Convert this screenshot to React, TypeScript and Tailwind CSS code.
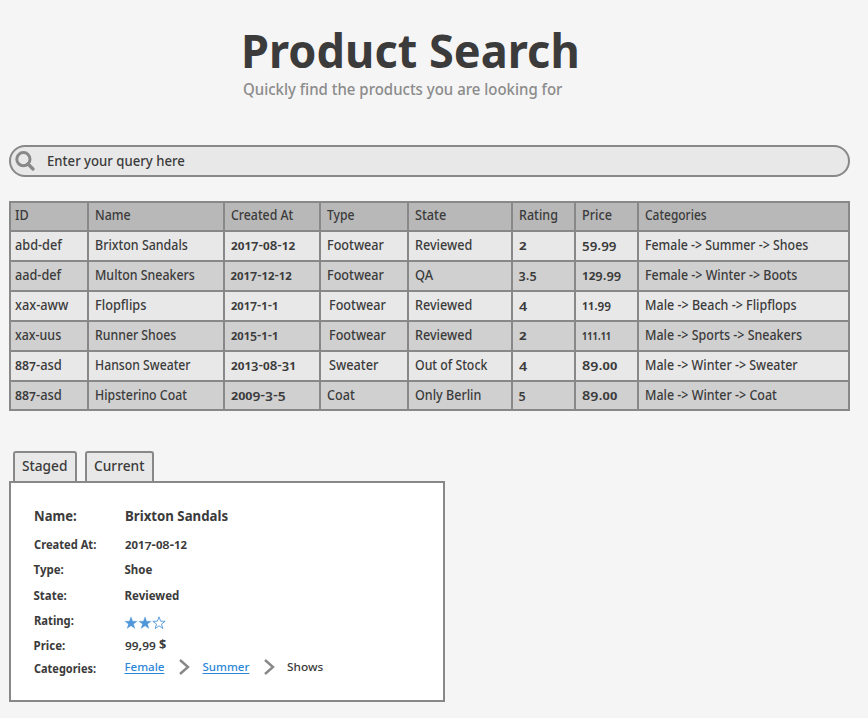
import { useLayoutEffect, useRef, useState } from "react";

// Sets a label to an exact measure, with old-style numerals.
function Fit({ text, w, className = "" }: { text: string; w: number; className?: string }) {
  const ref = useRef<HTMLSpanElement>(null);
  const [scale, setScale] = useState(1);
  useLayoutEffect(() => {
    if (ref.current) setScale(w / ref.current.offsetWidth);
  }, [w, text]);
  const parts = /\d/.test(text) ? text.split("") : [text];
  return (
    <span className="block" style={{ width: w }}>
      <span
        ref={ref}
        className={"inline-block origin-left whitespace-pre align-top " + className}
        style={{ transform: `scaleX(${scale})` }}
      >
        {parts.map((c, i) =>
          /^[012]$/.test(c) ? (
            <span key={i} className="text-[0.84em] leading-none font-bold">{c}</span>
          ) : /^[34579]$/.test(c) ? (
            <span key={i} className="align-[-0.08em] text-[0.93em] leading-none font-semibold">{c}</span>
          ) : /^[68]$/.test(c) ? (
            <span key={i} className="text-[0.95em] leading-none font-semibold">{c}</span>
          ) : (
            c
          ),
        )}
      </span>
    </span>
  );
}

type Cell = [string, number, boolean?];

const header: Cell[] = [["ID", 14], ["Name", 36], ["Created At", 62], ["Type", 28], ["State", 31], ["Rating", 39], ["Price", 30], ["Categories", 62]];

const rows: Cell[][] = [
  [["abd-def", 47], ["Brixton Sandals", 93], ["2017-08-12", 64], ["Footwear", 57], ["Reviewed", 57], ["2", 7], ["59.99", 34], ["Female -> Summer -> Shoes", 163]],
  [["aad-def", 46], ["Multon Sneakers", 100], ["2017-12-12", 61], ["Footwear", 57], ["QA", 18], ["3.5", 18], ["129.99", 39], ["Female -> Winter -> Boots", 152]],
  [["xax-aww", 53], ["Flopflips", 51], ["2017-1-1", 47], ["Footwear", 57, true], ["Reviewed", 57], ["4", 8], ["11.99", 29], ["Male -> Beach -> Flipflops", 152]],
  [["xax-uus", 46], ["Runner Shoes", 81], ["2015-1-1", 47], ["Footwear", 57, true], ["Reviewed", 57], ["2", 7], ["111.11", 29], ["Male -> Sports -> Sneakers", 157]],
  [["887-asd", 47], ["Hanson Sweater", 96], ["2013-08-31", 65], ["Sweater", 49, true], ["Out of Stock", 72], ["4", 8], ["89.00", 35], ["Male -> Winter -> Sweater", 153]],
  [["887-asd", 47], ["Hipsterino Coat", 92], ["2009-3-5", 55], ["Coat", 28], ["Only Berlin", 66], ["5", 7], ["89.00", 35], ["Male -> Winter -> Coat", 132]],
];

const star = "M7 .8 8.6 5.2 13.2 5.3 9.5 8.1 10.9 12.5 7 9.8 3.1 12.5 4.5 8.1 .8 5.3 5.4 5.2Z";

function Star({ filled }: { filled: boolean }) {
  return (
    <svg width="14" height="14" viewBox="0 0 14 14">
      <path d={star} fill={filled ? "#4f97d8" : "none"} stroke="#4f97d8" strokeWidth={filled ? 0.3 : 0.9} />
    </svg>
  );
}

function Chevron() {
  return (
    <svg width="11" height="16" viewBox="0 0 11 16" fill="none" stroke="#888" strokeWidth="2.4">
      <path d="M1 1 9 8 1 15" />
    </svg>
  );
}

function Row({ label, w, h, children }: { label: string; w: number; h: string; children: React.ReactNode }) {
  return (
    <div className={"flex items-center " + h}>
      <div className="w-[91px]">
        <Fit text={label} w={w} />
      </div>
      {children}
    </div>
  );
}

export default function App() {
  return (
    <div className="h-[718px] w-[868px] overflow-hidden bg-[#f5f5f5] pl-[9px] font-['Noto_Sans',sans-serif] text-[#3b3b3b]">
      <header className="h-[145px] pt-[26px] pl-[232px]">
        <h1 className="text-[47px] leading-[48px] font-bold">
          <Fit text="Product Search" w={339} />
        </h1>
        <p className="pt-[3px] pl-[2px] text-[15.5px] leading-[24px] font-medium text-[#8b8b8b]">
          <Fit text="Quickly find the products you are looking for" w={319} />
        </p>
      </header>

      <div className="flex h-8 w-[841px] items-center rounded-full border-2 border-[#888] bg-[#e8e8e8] pl-[4px]">
        <svg width="20" height="20" viewBox="0 0 20 20" fill="none" stroke="#888">
          <circle cx="8.4" cy="8.2" r="6.6" strokeWidth="3" />
          <path d="m13 13 5 5" strokeWidth="3.2" strokeLinecap="round" />
        </svg>
        <div className="pb-[2px] pl-[12px] text-[14px] font-medium">
          <Fit text="Enter your query here" w={138} />
        </div>
      </div>

      <div className="mt-6 grid w-[841px] grid-cols-[76px_134px_94px_86px_102px_61px_61px_209px] grid-rows-[27px_repeat(5,28px)_27px] gap-[2px] border-2 border-[#888] bg-[#888] text-[13.5px] leading-[26px] font-medium">
        {header.map(([t, w], i) => (
          <div key={t} className={"bg-[#b8b8b8] leading-[25px] " + (i === 0 ? "pl-[4px]" : "pl-[5.5px]")}>
            <Fit text={t} w={w} />
          </div>
        ))}
        {rows.map((row, r) =>
          row.map(([t, w, inset], i) => (
            <div
              key={r + "-" + i}
              className={(r % 2 ? "bg-[#d0d0d0] " : "bg-[#e8e8e8] ") + (i === 0 ? "pl-[4px]" : inset ? "pl-[8px]" : "pl-[5.5px]")}
            >
              <Fit text={t} w={w} />
            </div>
          )),
        )}
      </div>

      <div className="mt-10 flex gap-2 pl-[4px] text-[14px] leading-[26px] font-medium">
        <div className="h-[30px] w-[64px] rounded-t-[3px] border-2 border-b-0 border-[#888] bg-[#e8e8e8] pl-[7px]">
          <Fit text="Staged" w={45} />
        </div>
        <div className="h-[30px] w-[69px] rounded-t-[3px] border-2 border-b-0 border-[#888] bg-[#e8e8e8] pl-[7px]">
          <Fit text="Current" w={50} />
        </div>
      </div>
      <section className="h-[221px] w-[436px] border-2 border-[#888] bg-white pt-[18px] pl-[22.5px] text-[11.5px] leading-[20px] font-bold">
        <div className="flex h-[31px] items-center pb-[2px] text-[14px]">
          <div className="w-[91px]">
            <Fit text="Name:" w={43} />
          </div>
          <Fit text="Brixton Sandals" w={103} />
        </div>
        <Row label="Created At:" w={62} h="h-[26px]"><Fit text="2017-08-12" w={62} /></Row>
        <Row label="Type:" w={30} h="h-[24px]"><Fit text="Shoe" w={28} /></Row>
        <Row label="State:" w={33} h="h-[27px]"><Fit text="Reviewed" w={55} /></Row>
        <Row label="Rating:" w={40} h="h-[24px]">
          <div className="-ml-[0.5px] flex pt-[4px]"><Star filled /><Star filled /><Star filled={false} /></div>
        </Row>
        <Row label="Price:" w={32} h="h-[25px]"><div className="pb-[2px]"><Fit text="99,99 $" w={41} /></div></Row>
        <Row label="Categories:" w={62} h="h-[22px]">
          <div className="flex items-center pb-[4px] font-medium">
            <a className="text-[#2b87d8]"><Fit text="Female" w={40} className="underline underline-offset-2" /></a>
            <span className="w-[38px] pl-[14px]"><Chevron /></span>
            <a className="text-[#2b87d8]"><Fit text="Summer" w={47} className="underline underline-offset-2" /></a>
            <span className="w-[37px] pl-[14px]"><Chevron /></span>
            <Fit text="Shows" w={36} />
          </div>
        </Row>
      </section>
    </div>
  );
}
